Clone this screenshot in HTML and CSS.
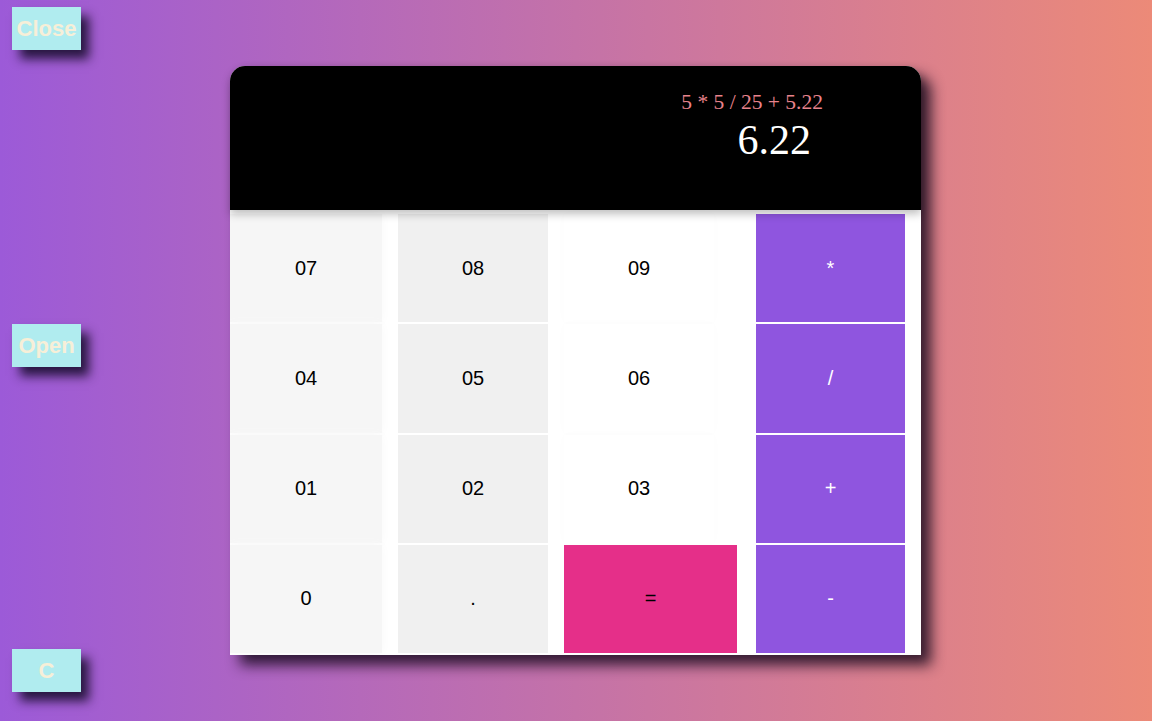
FILE: index.html
```html
<!DOCTYPE html>
<html>
<head>
<meta charset="utf-8">
<link rel="stylesheet" href="styles.css">
</head>
<body class="page">
  <aside class="side">
    <button class="side-btn btn-close">Close</button>
    <button class="side-btn btn-open">Open</button>
    <button class="side-btn btn-clear">C</button>
  </aside>
  <main class="calc">
    <section class="display">
      <div class="expr">5 * 5 / 25 + 5.22</div>
      <div class="result">6.22</div>
    </section>
    <section class="keys">
      <button class="key c1">07</button>
      <button class="key c2">08</button>
      <button class="key c3">09</button>
      <button class="key op">*</button>
      <button class="key c1">04</button>
      <button class="key c2">05</button>
      <button class="key c3">06</button>
      <button class="key op">/</button>
      <button class="key c1">01</button>
      <button class="key c2">02</button>
      <button class="key c3">03</button>
      <button class="key op">+</button>
      <button class="key c1">0</button>
      <button class="key c2">.</button>
      <button class="key eq">=</button>
      <button class="key op">-</button>
    </section>
  </main>
</body>
</html>
```
FILE: styles.css
```css
html, body {
  margin: 0;
  padding: 0;
}
.page {
  height: 721px;
  overflow: hidden;
  display: flex;
  align-items: flex-start;
  background: linear-gradient(to right, #9c5ad8, #ec8a78);
  font-family: "Liberation Sans", Arial, sans-serif;
}
.side {
  display: flex;
  flex-direction: column;
  padding: 7px 0 0 12px;
  width: 69px;
  flex: none;
}
.side-btn {
  width: 69px;
  height: 43px;
  padding: 0;
  border: none;
  background: #b0ecef;
  color: #f7efd8;
  font-family: "Liberation Sans", Arial, sans-serif;
  font-weight: bold;
  font-size: 22px;
  line-height: 40px;
  box-shadow: 8px 9px 10px rgba(20, 10, 40, 0.85);
}
.btn-open {
  margin-top: 274px;
}
.btn-clear {
  margin-top: 282px;
}
.calc {
  flex: none;
  margin-left: 149px;
  margin-top: 66px;
  width: 691px;
  background: #fff;
  border-radius: 15px 15px 0 0;
  box-shadow: 10px 10px 14px rgba(25, 10, 30, 0.85);
}
.display {
  position: relative;
  z-index: 1;
  height: 144px;
  box-sizing: border-box;
  background: #000;
  border-radius: 15px 15px 0 0;
  padding: 24px 98px 0 0;
  display: flex;
  flex-direction: column;
  align-items: flex-end;
  font-family: "Liberation Serif", "Times New Roman", serif;
  box-shadow: 0 4px 8px rgba(0, 0, 0, 0.25);
}
.expr {
  font-size: 21.5px;
  line-height: 25px;
  color: #e8838c;
}
.result {
  margin-top: 2px;
  margin-right: 12px;
  font-size: 42px;
  line-height: 46px;
  color: #fff;
}
.keys {
  display: grid;
  grid-template-columns: 152px 150px 150px 1fr;
  grid-auto-rows: 108.25px;
  column-gap: 16px;
  row-gap: 2px;
  padding: 4px 16px 2px 0;
  overflow: hidden;
}
.key {
  border: none;
  padding: 0;
  margin: 0;
  font-family: "Liberation Sans", Arial, sans-serif;
  font-size: 20px;
  color: #000;
}
.c1 {
  background: #f6f6f6;
  box-shadow: 0 0 10px #f8f8f8;
}
.c2 {
  background: #f0f0f0;
}
.c3 {
  background: #fff;
  box-shadow: 0 0 10px rgba(0, 0, 0, 0.015);
}
.op {
  justify-self: end;
  width: 149px;
  background: #8f55df;
  color: #fff;
}
.eq {
  width: 173px;
  background: #e52f89;
  color: #000;
}
```
